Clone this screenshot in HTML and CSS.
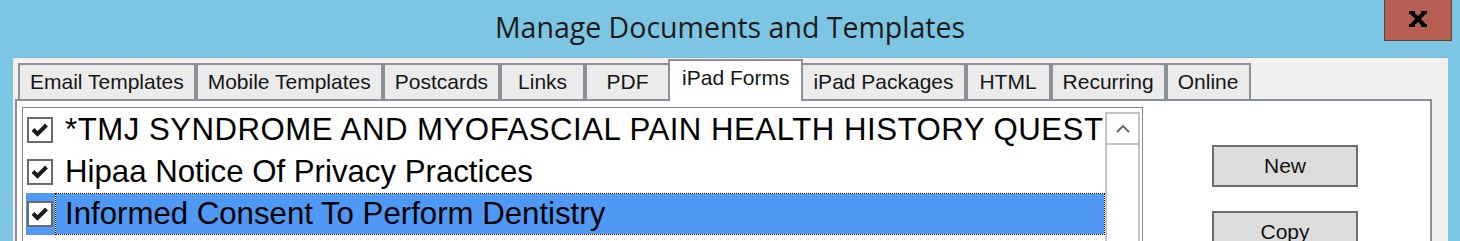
FILE: index.html
```html
<!DOCTYPE html>
<html lang="en">
<head>
    <meta charset="UTF-8">
    <title>Manage Documents and Templates</title>
    <link rel="stylesheet" href="styles.css">
</head>
<body>
    <div class="titlebar">
        <div class="title">Manage Documents and Templates</div>
        <div class="close">
            <svg width="18" height="16" viewBox="0 0 18 16">
                <path d="M3 2 L15 14 M15 2 L3 14" stroke="#000" stroke-width="4" fill="none"/>
                <path d="M0 1.5h6 M12 1.5h6 M0 14.5h6 M12 14.5h6" stroke="#000" stroke-width="3"/>
            </svg>
        </div>
    </div>

    <div class="frame">
        <div class="tabs">
            <div class="tab">Email Templates</div>
            <div class="tab">Mobile Templates</div>
            <div class="tab">Postcards</div>
            <div class="tab">Links</div>
            <div class="tab">PDF</div>
            <div class="tab active">iPad Forms</div>
            <div class="tab">iPad Packages</div>
            <div class="tab">HTML</div>
            <div class="tab">Recurring</div>
            <div class="tab">Online</div>
        </div>

        <div class="panel">
            <div class="list">
                <div class="items">
                    <div class="row">
                        <span class="check"><svg width="22" height="22" viewBox="0 0 22 22"><polyline points="4,10.5 8.5,15 17.5,6" fill="none" stroke="#1a1a1a" stroke-width="4"/></svg></span>
                        <span class="label caps">*TMJ SYNDROME AND MYOFASCIAL PAIN HEALTH HISTORY QUESTIONNAIRE</span>
                    </div>
                    <div class="row">
                        <span class="check"><svg width="22" height="22" viewBox="0 0 22 22"><polyline points="4,10.5 8.5,15 17.5,6" fill="none" stroke="#1a1a1a" stroke-width="4"/></svg></span>
                        <span class="label">Hipaa Notice Of Privacy Practices</span>
                    </div>
                    <div class="row selected">
                        <span class="check"><svg width="22" height="22" viewBox="0 0 22 22"><polyline points="4,10.5 8.5,15 17.5,6" fill="none" stroke="#1a1a1a" stroke-width="4"/></svg></span>
                        <span class="label">Informed Consent To Perform Dentistry</span>
                    </div>
                </div>
                <div class="scrollbar">
                    <div class="scroll-up">
                        <svg width="14" height="8" viewBox="0 0 14 8"><polyline points="1,7 7,1 13,7" fill="none" stroke="#666" stroke-width="2"/></svg>
                    </div>
                </div>
            </div>

            <div class="actions">
                <button class="btn">New</button>
                <button class="btn">Copy</button>
            </div>
        </div>
    </div>
</body>
</html>
```
FILE: styles.css
```css
body {
    margin: 0;
    height: 241px;
    overflow: hidden;
    background-color: #7dc6e3;
    font-family: "Liberation Sans", Arial, sans-serif;
}

.titlebar {
    display: grid;
    grid-template-columns: 1fr auto 1fr;
    height: 57px;
}

.title {
    grid-column: 2;
    margin-top: 8px;
    font-family: "Open Sans", "Noto Sans", sans-serif;
    font-size: 28.5px;
    line-height: 38px;
    color: #1b1b1b;
    white-space: nowrap;
}

.close {
    grid-column: 3;
    justify-self: end;
    width: 68px;
    height: 41px;
    margin-right: 8px;
    box-sizing: border-box;
    background-color: #b75f53;
    border: 1px solid #5e4540;
    border-top: none;
    display: flex;
    align-items: center;
    justify-content: center;
    padding-bottom: 3px;
}

.frame {
    margin: 0 12px 0 13px;
    border-top: 1px solid #8eb4cc;
    background-color: #f0f0f0;
    padding: 1px 16px 0 2px;
    height: 300px;
}

/* tab strip */
.tabs {
    display: flex;
    align-items: flex-end;
    padding-left: 3px;
}

.tab {
    box-sizing: border-box;
    min-width: 85px;
    height: 36px;
    padding: 0 10px;
    border: 2px solid #8c9098;
    border-bottom: none;
    background-color: #ebebeb;
    font-size: 21px;
    line-height: 34px;
    text-align: center;
    color: #161616;
    white-space: nowrap;
}

.tab.active {
    position: relative;
    z-index: 1;
    height: 42px;
    margin: 0 -2px -2px;
    padding: 0 12px 6px;
    background-color: #fff;
}

.panel {
    display: flex;
    align-items: flex-start;
    height: 200px;
    padding: 6px 0 0 5px;
    border: 2px solid #8c9098;
    background-color: #fff;
}

/* checked list */
.list {
    display: flex;
    width: 1121px;
    height: 300px;
    box-sizing: border-box;
    padding: 0 2px 0 3px;
    border: 1px solid #82878f;
    flex: none;
}

.items {
    flex: 1;
    min-width: 0;
    overflow: hidden;
    padding-top: 1px;
}

.row {
    display: flex;
    align-items: center;
    height: 42px;
}

.check {
    width: 26px;
    height: 26px;
    box-sizing: border-box;
    margin: 0 2px 0 1px;
    border: 2px solid #6a6a6a;
    background-color: #fff;
    flex: none;
}

.check svg {
    display: block;
}

.label {
    flex: 1;
    height: 42px;
    box-sizing: border-box;
    padding-left: 9px;
    border: 1px dotted transparent;
    font-size: 31.2px;
    line-height: 40px;
    color: #000;
    white-space: nowrap;
}

.label.caps {
    letter-spacing: 0.5px;
}

.row.selected {
    background-color: #4f98f4;
}

.row.selected .label {
    border-color: #000;
    background: linear-gradient(#4f98f4, #4f98f4) padding-box, #fff;
}

.scrollbar {
    width: 35px;
    height: 300px;
    box-sizing: border-box;
    margin-top: 4px;
    border: 2px solid #c3c3c3;
    border-bottom: none;
    flex: none;
}

.scroll-up {
    height: 31px;
    box-sizing: border-box;
    border-bottom: 2px solid #c3c3c3;
    display: flex;
    align-items: center;
    justify-content: center;
}

/* buttons on the right */
.actions {
    display: flex;
    flex-direction: column;
    gap: 24px;
    margin: 38px 0 0 69px;
}

.btn {
    width: 146px;
    height: 42px;
    box-sizing: border-box;
    padding: 0;
    border: 2px solid #6e6e6e;
    background-color: #dcdcdc;
    font-family: "Liberation Sans", Arial, sans-serif;
    font-size: 21px;
    color: #111;
}
```
